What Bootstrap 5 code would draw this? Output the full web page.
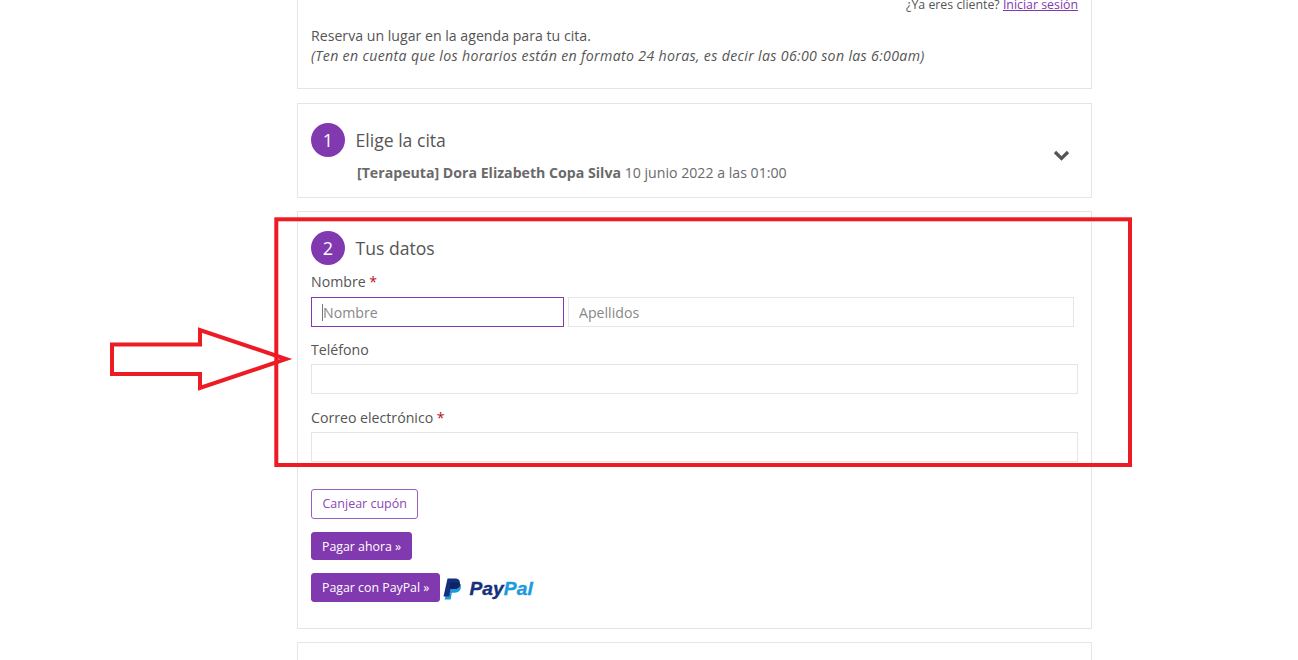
<!DOCTYPE html>
<html lang="es">
<head>
<meta charset="utf-8">
<title>Reserva</title>
<link href="https://cdn.jsdelivr.net/npm/bootstrap@5.3.0/dist/css/bootstrap.min.css" rel="stylesheet">
<style>
html,body{height:660px;overflow:hidden;background:#fff}
body{font-family:"Open Sans",sans-serif;font-size:14.15px;line-height:20px;color:#555;position:relative}
.sheet{width:795px;margin-left:297px;margin-top:-60px;display:flex;flex-direction:column;gap:13px}
.pane{border:1px solid #e5e5e5;background:#fff;padding:0 13px;position:relative}
.pane-intro{height:149px;padding-top:55px;margin-bottom:1px}
.login-line{font-size:12.35px;line-height:18px;text-align:right;height:18px;margin-bottom:12px}
.login-line a{color:#8139b0}
.pane-intro p{margin:0;line-height:20px;color:#555}
.pane-intro em{letter-spacing:.335px}
.pane-one{height:95px;padding-top:19px}
.pane-two{height:418px;padding-top:19px}
.pane-three{height:60px}
.step-head{display:flex;align-items:center;gap:10.5px;height:34px}
.step-dot{width:34px;height:34px;border-radius:50%;background:#8139b0;color:#fff;font-size:18px;display:flex;align-items:center;justify-content:center;flex:none}
.step-title{font-size:17.6px;color:#555;line-height:34px}
.chosen{margin:6px 0 0 46px;line-height:20px;color:#6a6a6a}
.chev{position:absolute;right:21px;top:45px;width:17px;height:12px}
.lbl{display:block;margin:0 0 4px;line-height:20px;color:#555}
.lbl-first{margin-bottom:5px}
.req{color:#b3121d}
.fld{height:30px;border:1px solid #e5e5e5;border-radius:0;padding:0 10px;font-size:14.15px;color:#555;box-shadow:none;background:#fff}
.fld::placeholder{color:#888;opacity:1}
.fld-on{border-color:#8139b0;padding-left:11px}
.fld-on:focus{border-color:#8139b0;box-shadow:none}
.name-row{display:flex;gap:4px;width:763px;position:relative}
.name-row .fld{width:253px;flex:none}
.name-row .fld+.fld{width:506px}
.caret-mark{position:absolute;left:11px;top:7px;width:1px;height:17px;background:#777}
.grp{margin-bottom:14px}
.grp-first{margin-top:7px;margin-bottom:13px}
.btn-purple,.btn-ghost{font-size:12.35px;line-height:18px;border-radius:3px;display:inline-block}
.btn-purple{background:#8139b0;border:1px solid #8139b0;color:#fff;padding:5px 10px 4px}
.btn-purple:hover{background:#8139b0;border-color:#8139b0;color:#fff}
.btn-now{padding-bottom:3px}
.btn-ghost{background:#fff;border:1px solid #9a5fc4;color:#8a48b6;padding:5px 10.5px;font-size:12.5px}
.actions{display:flex;flex-direction:column;align-items:flex-start;margin-top:27px}
.actions>*{margin-bottom:13px}
.pp-row{display:flex;align-items:center;gap:3px}
.pp-logo{display:flex;align-items:center;gap:7px;height:24px;margin-top:2px}
.pp-word{font-family:"Liberation Sans",sans-serif;font-weight:700;font-style:italic;font-size:19.2px;line-height:24px;color:#14307c;letter-spacing:.1px;-webkit-text-stroke:.4px currentColor}
.pp-word span{color:#1c9ade}
.mark-layer{position:absolute;left:0;top:0;width:1298px;height:660px;pointer-events:none}
</style>
</head>
<body>
<main class="sheet">
  <section class="pane pane-intro">
    <div class="login-line">¿Ya eres cliente? <a href="#">Iniciar sesión</a></div>
    <p>Reserva un lugar en la agenda para tu cita.<br><em>(Ten en cuenta que los horarios están en formato 24 horas, es decir las 06:00 son las 6:00am)</em></p>
  </section>
  <section class="pane pane-one">
    <div class="step-head"><span class="step-dot">1</span><span class="step-title">Elige la cita</span></div>
    <p class="chosen"><strong>[Terapeuta] Dora Elizabeth Copa Silva</strong> 10 junio 2022 a las 01:00</p>
    <svg class="chev" viewBox="0 0 17 12" aria-hidden="true"><path d="M2 3l6.500 6.500L15 3" fill="none" stroke="#555" stroke-width="3.2"/></svg>
  </section>
  <section class="pane pane-two">
    <div class="step-head"><span class="step-dot">2</span><span class="step-title">Tus datos</span></div>
    <form>
      <div class="grp grp-first">
        <label class="lbl lbl-first">Nombre <span class="req">*</span></label>
        <div class="name-row">
          <input class="form-control fld fld-on" placeholder="Nombre">
          <input class="form-control fld" placeholder="Apellidos">
          <span class="caret-mark"></span>
        </div>
      </div>
      <div class="grp">
        <label class="lbl">Teléfono</label>
        <input class="form-control fld">
      </div>
      <div class="grp">
        <label class="lbl">Correo electrónico <span class="req">*</span></label>
        <input class="form-control fld">
      </div>
      <div class="actions">
        <button type="button" class="btn btn-ghost">Canjear cupón</button>
        <button type="button" class="btn btn-purple btn-now">Pagar ahora »</button>
        <div class="pp-row">
          <button type="button" class="btn btn-purple">Pagar con PayPal »</button>
          <div class="pp-logo">
            <svg width="19" height="22" viewBox="0 0 19 22" aria-hidden="true">
              <path d="M6 4.500h6.800c3.200 0 5.700 1.800 5.100 5.200-.6 3.400-3.100 5-6.400 5H8.800L7.700 21.500H1.600z" fill="#1c9ade"/>
              <path d="M4.500 .5h7.200c3.500 0 5.800 1.800 5.200 5.300-.6 3.500-3.300 5.300-6.800 5.300H7.400L6.200 18.500H.5z" fill="#14307c"/>
              <path d="M6 4.500h6.800c2.200 0 3.800.5 4.700 1.900-.7 3-3.200 4.700-6.400 4.700H7.400z" fill="#0f2266"/>
            </svg>
            <span class="pp-word">Pay<span>Pal</span></span>
          </div>
        </div>
      </div>
    </form>
  </section>
  <section class="pane pane-three"></section>
</main>
<svg class="mark-layer" viewBox="0 0 1298 660" aria-hidden="true">
  <rect x="276.300" y="219.300" width="853.700" height="245.700" fill="none" stroke="#ed1c24" stroke-width="4"/>
  <path d="M112 344.500H200V330L286 359L200 388V374H112Z" fill="none" stroke="#ed1c24" stroke-width="4"/>
</svg>
</body>
</html>
